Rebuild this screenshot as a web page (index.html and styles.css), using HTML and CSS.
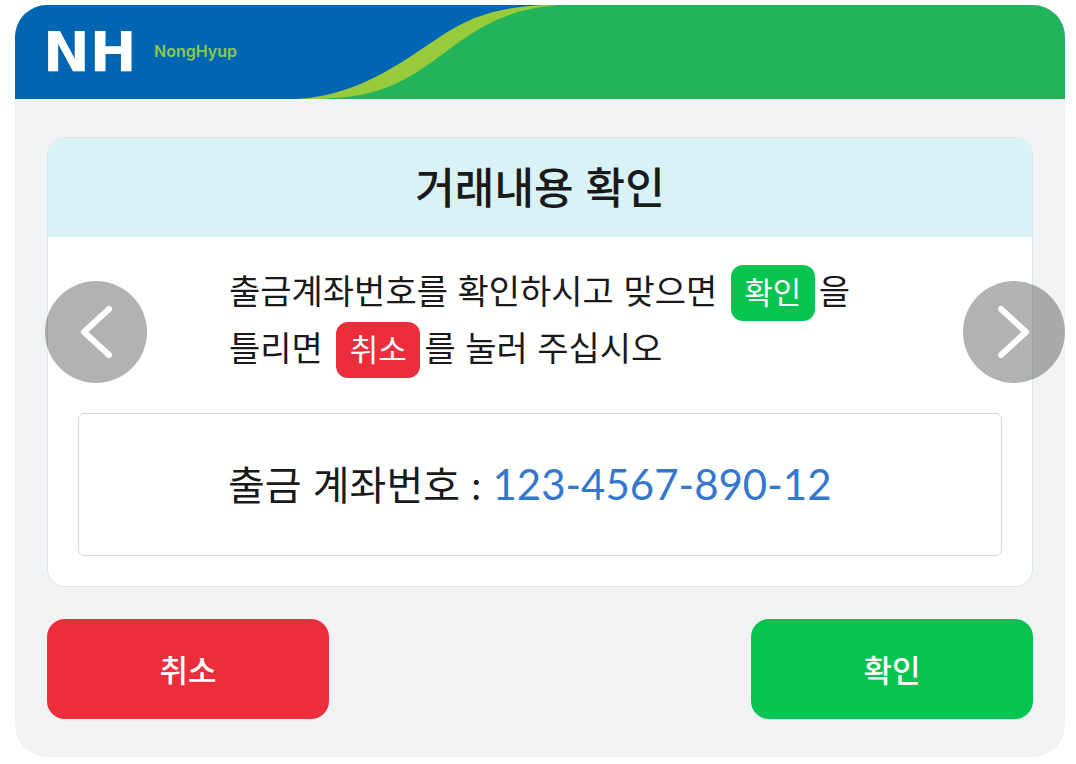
FILE: index.html
```html
<!DOCTYPE html>
<html lang="ko">
<head>
<meta charset="utf-8">
<meta name="viewport" content="width=device-width, initial-scale=1">
<title>거래내용 확인</title>
<link rel="stylesheet" href="styles.css">
</head>
<body>
<div class="screen">
  <header class="header">
    <svg class="swoosh" width="330" height="94" viewBox="0 0 330 94" aria-hidden="true">
      <path fill="#0066b3" d="M0 0H270V60L30 94H0Z"/>
      <path fill="#97cb3b" d="M16 94C56 92 90 78 133 50C172 24 194 3 265 0H330V94Z"/>
      <path fill="#22b45b" d="M40 94C82 92 106 87 140 65C184 36 208 6 278 0H330V94Z"/>
    </svg>
    <div class="brand"><span class="brand-mark">NH</span><span class="brand-name">NongHyup</span></div>
  </header>
  <main class="content">
    <section class="card">
      <h1 class="title">거래내용 확인</h1>
      <div class="card-body">
        <p class="message">출금계좌번호를 확인하시고 맞으면 <span class="key key-ok">확인</span>을<br>틀리면 <span class="key key-cancel">취소</span>를 눌러 주십시오</p>
        <div class="account">
          <p class="account-line">출금 계좌번호 <span class="colon">:</span> <span class="number">123-4567-890-12</span></p>
        </div>
      </div>
      <button class="arrow arrow-prev" type="button" aria-label="이전">
        <svg width="102" height="102" viewBox="0 0 102 102"><path d="M64 28L39 51L64 74"/></svg>
      </button>
      <button class="arrow arrow-next" type="button" aria-label="다음">
        <svg width="102" height="102" viewBox="0 0 102 102"><path d="M38 28L63 51L38 74"/></svg>
      </button>
    </section>
    <div class="actions">
      <button class="action action-cancel" type="button">취소</button>
      <button class="action action-ok" type="button">확인</button>
    </div>
  </main>
</div>
</body>
</html>
```
FILE: styles.css
```css
* {
  box-sizing: border-box;
}

body {
  margin: 0;
  padding: 5px 11px 7px 15px;
  background: #fff;
  color: #1a1a1a;
  font-family: "Noto Sans CJK KR", sans-serif;
}

h1,
p {
  margin: 0;
}

.screen {
  overflow: hidden;
  border-radius: 32px;
  background: #f0f2f4;
}

.header {
  position: relative;
  display: flex;
  align-items: center;
  height: 94px;
  padding-left: 28px;
  background: linear-gradient(to right, #0066b3 400px, #22b45b 400px);
}

.swoosh {
  position: absolute;
  top: 0;
  left: 265px;
}

.brand {
  position: relative;
  display: flex;
  align-items: center;
}

.brand-mark {
  width: 111px;
  color: #fff;
  font: bold 56px/60px "DejaVu Sans", sans-serif;
}

.brand-name {
  padding-bottom: 2px;
  color: #8cc94b;
  font: 600 16px/20px Inter, sans-serif;
}

.content {
  padding: 38px 32px;
}

.card {
  position: relative;
  border: 1px solid #dfe2e4;
  border-radius: 18px;
  background: #fff;
}

.title {
  padding-bottom: 4px;
  border-radius: 17px 17px 0 0;
  background: #d8f2f6;
  font-size: 43px;
  font-weight: 500;
  line-height: 95px;
  text-align: center;
}

.card-body {
  padding: 27px 30px 30px;
}

.message {
  max-width: 622px;
  margin: 0 auto 35px;
  font-size: 34px;
  line-height: 52px;
}

.key {
  display: inline-block;
  width: 84px;
  margin: 0 4px;
  padding-bottom: 4px;
  border-radius: 12px;
  color: #fff;
  font-size: 31px;
  line-height: 52px;
  text-align: center;
}

.key-ok,
.action-ok {
  background: #05c550;
}

.key-cancel,
.action-cancel {
  background: #ee2d3c;
}

.account {
  padding: 39px 30px 42px;
  border: 1px solid #d5d7d9;
  border-radius: 6px;
}

.account-line {
  max-width: 624px;
  margin: 0 auto;
  font-size: 40px;
  line-height: 60px;
}

.colon,
.number {
  font-family: Lato, sans-serif;
  line-height: 40px;
}

.number {
  color: #3478ce;
  font-size: 42px;
}

.arrow {
  position: absolute;
  top: 143px;
  width: 102px;
  height: 102px;
  padding: 0;
  border: 0;
  border-radius: 50%;
  background: rgba(0, 0, 0, 0.3);
  cursor: pointer;
}

.arrow svg {
  display: block;
  fill: none;
  stroke: #fff;
  stroke-width: 6;
  stroke-linecap: round;
  stroke-linejoin: round;
}

.arrow-prev {
  left: -3px;
}

.arrow-next {
  right: -33px;
}

.actions {
  display: flex;
  justify-content: space-between;
  margin-top: 32px;
}

.action {
  width: 282px;
  height: 100px;
  border: 0;
  border-radius: 18px;
  color: #fff;
  font: 500 31px/48px "Noto Sans CJK KR", sans-serif;
  cursor: pointer;
}
```
